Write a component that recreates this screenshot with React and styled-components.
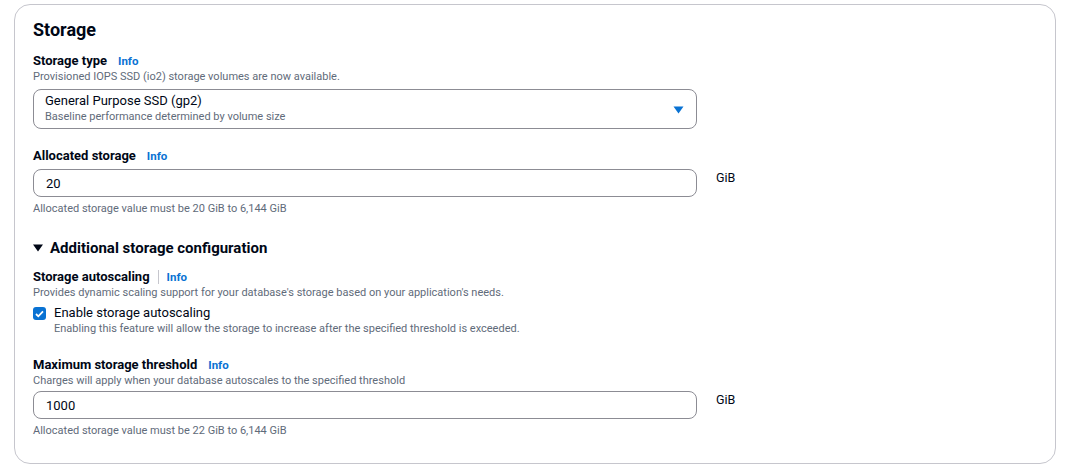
import React from 'react'
import styled, { createGlobalStyle } from 'styled-components'

const GlobalStyle = createGlobalStyle`
  html, body {
    margin: 0;
    padding: 0;
    background: #ffffff;
  }
  body {
    font-family: Roboto, "Open Sans", Arial, sans-serif;
    color: #000716;
    -webkit-font-smoothing: antialiased;
  }
`

const Page = styled.div`
  padding: 4px 16px 10px 14px;
`

const Card = styled.section`
  box-sizing: border-box;
  height: 460px;
  border: 1px solid #c6c6cd;
  border-radius: 16px;
  background: #ffffff;
  padding: 13px 18px 20px 18px;
`

const Title = styled.h2`
  margin: 0 0 11px;
  font-size: 18px;
  line-height: 24px;
  font-weight: 700;
  color: #000716;
`

const Field = styled.div`
  display: flex;
  flex-direction: column;
  margin-bottom: ${(p) => p.$gap || 20}px;
`

const LabelRow = styled.div`
  display: flex;
  align-items: center;
  gap: 11px;
  font-size: 13px;
  line-height: 16px;
  font-weight: 700;
`

const Divider = styled.span`
  width: 1px;
  height: 14px;
  background: #c6c6cd;
  margin: 0 -3px 0 -3px;
`

const Info = styled.a`
  color: #0972d3;
  font-size: 11.5px;
  font-weight: 700;
  text-decoration: none;
`

const Desc = styled.div`
  font-size: 11px;
  line-height: 15px;
  color: #5f6b7a;
`

const Row = styled.div`
  display: flex;
  align-items: flex-start;
  gap: 19px;
  margin-top: ${(p) => p.$top || 6}px;
`

const SelectBox = styled.div`
  width: 664px;
  box-sizing: border-box;
  border: 1px solid #8c8c94;
  border-radius: 8px;
  padding: 3px 12px 4px 11px;
  display: flex;
  align-items: center;
  justify-content: space-between;
`

const SelectMain = styled.div`
  font-size: 13px;
  line-height: 16px;
  color: #000716;
`

const Caret = styled.svg`
  width: 11px;
  height: 8px;
  margin-top: 2px;
`

const Input = styled.div`
  width: 664px;
  height: 28px;
  box-sizing: border-box;
  border: 1px solid #8c8c94;
  border-radius: 8px;
  padding: 0 12px;
  display: flex;
  align-items: center;
  font-size: 13px;
  color: #000716;
`

const Unit = styled.span`
  font-size: 12.5px;
  line-height: 16px;
  margin-top: 1px;
`

const Hint = styled.div`
  margin-top: 4px;
  font-size: 11px;
  line-height: 15px;
  color: #5f6b7a;
`

const Expander = styled.div`
  display: flex;
  align-items: center;
  gap: 7px;
  font-size: 15px;
  font-weight: 700;
  line-height: 20px;
  margin: -1px 0 11px;
`

const CheckRow = styled.div`
  display: flex;
  gap: 8px;
  margin-top: 5px;
`

const Box = styled.span`
  width: 13px;
  height: 13px;
  border-radius: 3px;
  background: #0972d3;
  display: flex;
  align-items: center;
  justify-content: center;
  margin-top: 2px;
  flex: none;
`

const CheckLabel = styled.div`
  font-size: 13px;
  line-height: 16px;
`

export default function App() {
  return (
    <>
      <GlobalStyle />
      <Page>
        <Card>
          <Title>Storage</Title>

          <Field $gap={19}>
            <LabelRow>
              Storage type <Info>Info</Info>
            </LabelRow>
            <Desc>Provisioned IOPS SSD (io2) storage volumes are now available.</Desc>
            <Row $top={5}>
              <SelectBox>
                <div>
                  <SelectMain>General Purpose SSD (gp2)</SelectMain>
                  <Desc>Baseline performance determined by volume size</Desc>
                </div>
                <Caret viewBox="0 0 11 8">
                  <path d="M0.5 0.5h10L5.5 7.5z" fill="#0972d3" />
                </Caret>
              </SelectBox>
            </Row>
          </Field>

          <Field $gap={23}>
            <LabelRow>
              Allocated storage <Info>Info</Info>
            </LabelRow>
            <Row $top={5}>
              <Input>20</Input>
              <Unit>GiB</Unit>
            </Row>
            <Hint>Allocated storage value must be 20 GiB to 6,144 GiB</Hint>
          </Field>

          <Expander>
            <svg width="10" height="8" viewBox="0 0 10 8">
              <path d="M0 0.5h10L5 7.5z" fill="#000716" />
            </svg>
            Additional storage configuration
          </Expander>

          <Field $gap={21}>
            <LabelRow>
              Storage autoscaling <Divider /> <Info>Info</Info>
            </LabelRow>
            <Desc>Provides dynamic scaling support for your database's storage based on your application's needs.</Desc>
            <CheckRow>
              <Box>
                <svg width="9" height="8" viewBox="0 0 9 8">
                  <path d="M1 4l2.3 2.3L8 1.3" stroke="#fff" strokeWidth="1.8" fill="none" />
                </svg>
              </Box>
              <div>
                <CheckLabel>Enable storage autoscaling</CheckLabel>
                <Desc>Enabling this feature will allow the storage to increase after the specified threshold is exceeded.</Desc>
              </div>
            </CheckRow>
          </Field>

          <Field $gap={0}>
            <LabelRow>
              Maximum storage threshold <Info>Info</Info>
            </LabelRow>
            <Desc>Charges will apply when your database autoscales to the specified threshold</Desc>
            <Row $top={3}>
              <Input>1000</Input>
              <Unit>GiB</Unit>
            </Row>
            <Hint>Allocated storage value must be 22 GiB to 6,144 GiB</Hint>
          </Field>
        </Card>
      </Page>
    </>
  )
}
